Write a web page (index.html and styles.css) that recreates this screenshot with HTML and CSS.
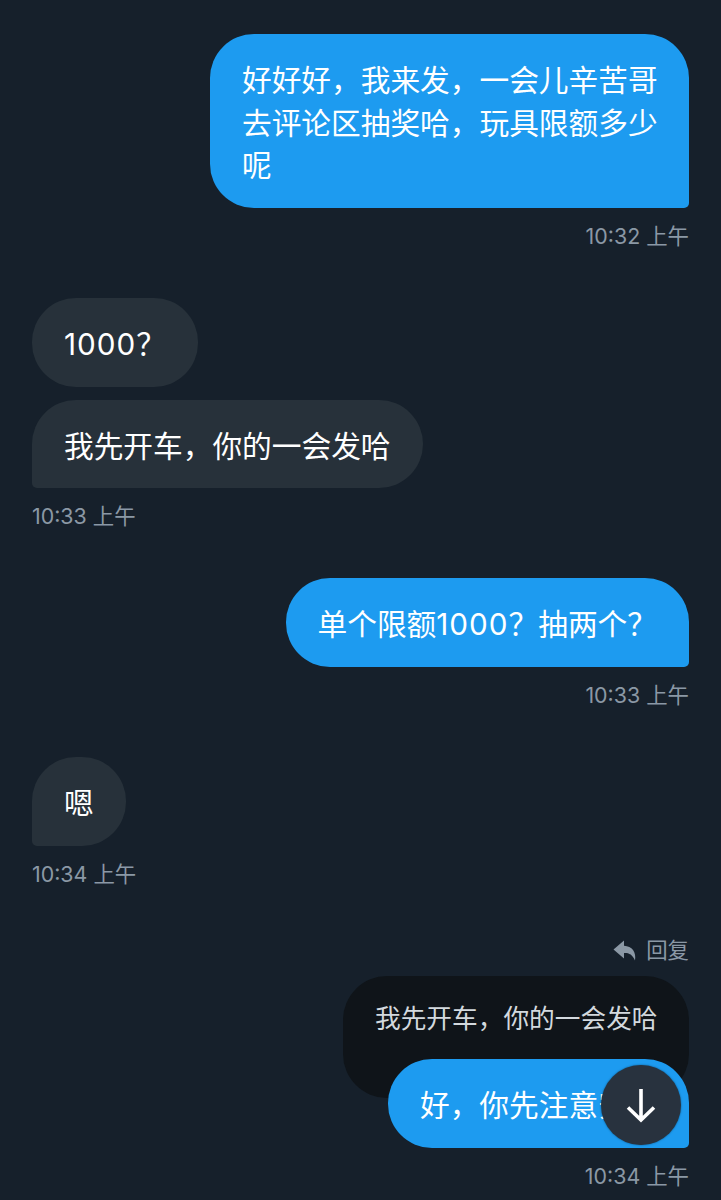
FILE: index.html
```html
<!DOCTYPE html>
<html lang="zh">
<head>
    <meta charset="UTF-8">
    <title>Chat</title>
    <link rel="stylesheet" href="styles.css">
</head>
<body>
<div class="chat">
    <div class="group out first">
        <div class="bubble out-bubble">好好好，我来发，一会儿辛苦哥去评论区抽奖哈，玩具限额多少呢</div>
        <div class="time">10:32 上午</div>
    </div>
    <div class="group in">
        <div class="bubble in-bubble top"><span class="num">1000</span>？</div>
        <div class="bubble in-bubble tail">我先开车，你的一会发哈</div>
        <div class="time">10:33 上午</div>
    </div>
    <div class="group out">
        <div class="bubble out-bubble">单个限额<span class="num">1000</span>？抽两个？</div>
        <div class="time">10:33 上午</div>
    </div>
    <div class="group in">
        <div class="bubble in-bubble tail">嗯</div>
        <div class="time">10:34 上午</div>
    </div>
    <div class="group out last">
        <div class="reply-label">
            <svg class="reply-icon" viewBox="0 0 24 24"><path d="M11 2.5 L0.5 11.5 L11 20.5 L11 15 C16 14.8 19.5 16.5 22 22.5 C23.5 14 19 8.2 11 7.8 Z"/></svg>
            <span>回复</span>
        </div>
        <div class="quoted">我先开车，你的一会发哈</div>
        <div class="bubble out-bubble reply-bubble">好，你先注意安全</div>
        <div class="time">10:34 上午</div>
    </div>
</div>
<button class="scroll-down">
    <svg viewBox="0 0 36 36"><path d="M18 2 V32 M5 20.5 L18 33 L31 20.5"/></svg>
</button>
</body>
</html>
```

FILE: styles.css
```css
* {
    box-sizing: border-box;
}
html, body {
    margin: 0;
    height: 1200px;
    overflow: hidden;
}
body {
    position: relative;
    background-color: #16202b;
    font-family: Inter, "Noto Sans CJK SC", sans-serif;
}
.chat {
    display: flex;
    flex-direction: column;
    gap: 47px;
    padding: 34px 32px 0;
}
.group {
    display: flex;
    flex-direction: column;
}
.out {
    align-items: flex-end;
}
.in {
    align-items: flex-start;
}
.last {
    margin-top: -1px;
}
.bubble {
    font-size: 29.7px;
    line-height: 42.5px;
    color: #fff;
    padding: 25.25px 32px 21.25px;
    border-radius: 44px;
}
.num {
    letter-spacing: 1px;
}
.out-bubble {
    background-color: #1d9bf0;
    border-bottom-right-radius: 5px;
}
.first .bubble {
    width: 479px;
    padding-right: 30px;
}
.in-bubble {
    background-color: #27313a;
    border-bottom-left-radius: 5px;
}
.in-bubble.top {
    border-bottom-left-radius: 44px;
    margin-bottom: 13px;
}
.top + .tail {
    padding-bottom: 20.25px;
}
.time {
    font-size: 21.4px;
    line-height: 30px;
    color: #8b98a5;
    margin-top: 13px;
}
.reply-label {
    display: flex;
    align-items: center;
    gap: 9px;
    font-size: 21.4px;
    line-height: 30px;
    color: #8b98a5;
}
.reply-icon {
    width: 24px;
    height: 24px;
    fill: #8b98a5;
}
.quoted {
    width: 346px;
    height: 122px;
    margin-top: 11px;
    padding: 25px 32px;
    font-size: 25.7px;
    line-height: 36px;
    color: #d3d9de;
    background-color: #0f1419;
    border-radius: 44px;
    white-space: nowrap;
}
.reply-bubble {
    width: 301px;
    height: 89px;
    margin-top: -39px;
    white-space: nowrap;
    overflow: hidden;
}
.scroll-down {
    position: absolute;
    left: 601px;
    top: 1065px;
    width: 80px;
    height: 80px;
    padding: 0;
    border: none;
    border-radius: 50%;
    background-color: #28323e;
    box-shadow: 0 0 2px rgba(0, 0, 0, 0.5);
    display: flex;
    align-items: center;
    justify-content: center;
}
.scroll-down svg {
    width: 36px;
    height: 36px;
    fill: none;
    stroke: #fff;
    stroke-width: 3.6;
}
```
